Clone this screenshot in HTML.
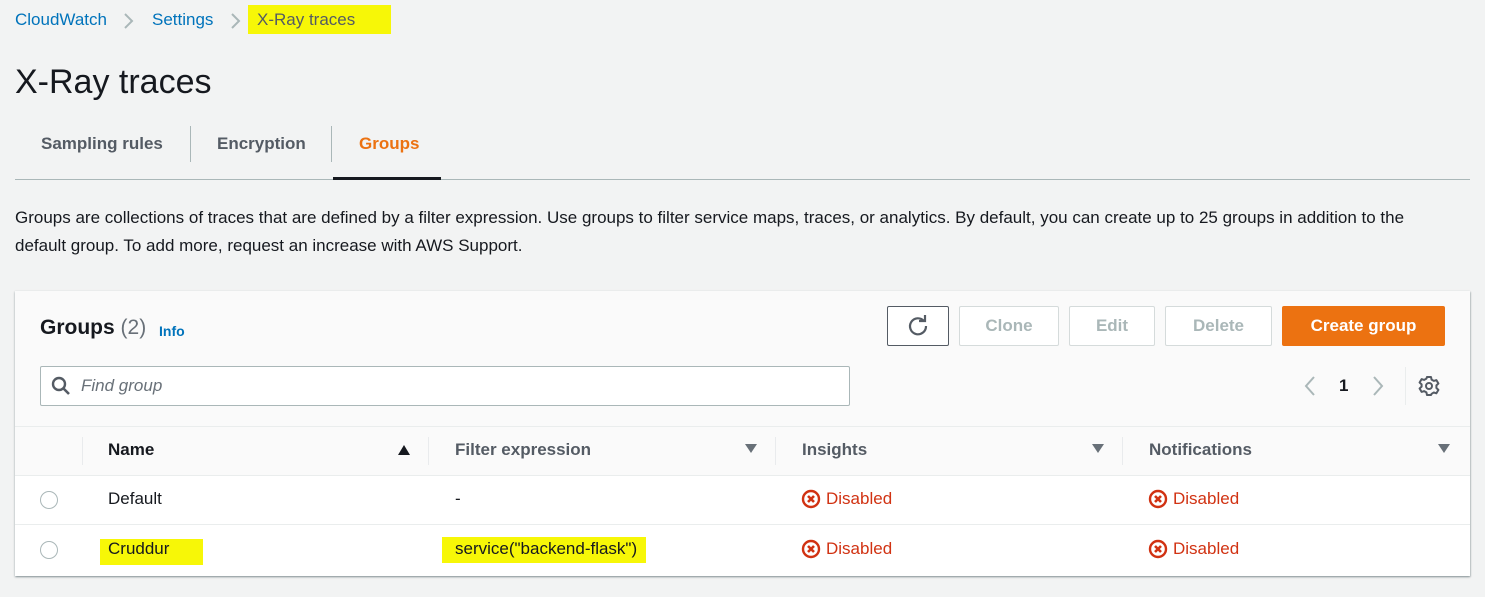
<!DOCTYPE html>
<html><head><meta charset="utf-8"><style>
*{box-sizing:border-box;margin:0;padding:0}
body{width:1485px;height:597px;background:#f2f3f3;font-family:"Liberation Sans",sans-serif;color:#16191f;position:relative;overflow:hidden}
.a{position:absolute;white-space:nowrap}
.btn{position:absolute;top:306px;height:40px;border:1px solid #d5dbdb;background:#fff;border-radius:2px;font-weight:bold;font-size:17px;color:#aab7b8;text-align:center;line-height:38px}
.th{position:absolute;font-weight:bold;font-size:17px;color:#16191f;top:440px}
.sep{position:absolute;top:437px;width:1px;height:28px;background:#e9ebed}
.tri{position:absolute;top:444px;width:0;height:0;border-left:6px solid transparent;border-right:6px solid transparent;border-top:9px solid #687078}
.dis{position:absolute;color:#d13212;font-size:17px;display:flex;align-items:center;gap:5px}
.radio{position:absolute;left:40px;width:18px;height:18px;border:1.5px solid #aab7b8;border-radius:50%;background:#fff}
</style></head><body>
<div class="a" style="left:15px;top:10px;font-size:17px;color:#0073bb">CloudWatch</div>
<svg class="a" style="left:122px;top:12px" width="14" height="18"><path d="M3 2l7 7-7 7" fill="none" stroke="#aab7b8" stroke-width="2"/></svg>
<div class="a" style="left:152px;top:10px;font-size:17px;color:#0073bb">Settings</div>
<svg class="a" style="left:229px;top:12px" width="14" height="18"><path d="M3 2l7 7-7 7" fill="none" stroke="#aab7b8" stroke-width="2"/></svg>
<div class="a" style="left:248px;top:5px;width:143px;height:29px;background:#f7f707"></div>
<div class="a" style="left:257px;top:10px;font-size:17px;color:#545b64">X-Ray traces</div>
<div class="a" style="left:15px;top:63px;font-size:34px;color:#16191f">X-Ray traces</div>
<div class="a" style="left:41px;top:134px;font-size:17px;font-weight:bold;color:#545b64">Sampling rules</div>
<div class="a" style="left:190px;top:126px;width:1px;height:36px;background:#aab7b8"></div>
<div class="a" style="left:217px;top:134px;font-size:17px;font-weight:bold;color:#545b64">Encryption</div>
<div class="a" style="left:331px;top:126px;width:1px;height:36px;background:#aab7b8"></div>
<div class="a" style="left:359px;top:134px;font-size:17px;font-weight:bold;color:#ec7211">Groups</div>
<div class="a" style="left:15px;top:179px;width:1455px;height:1px;background:#aab7b8"></div>
<div class="a" style="left:333px;top:177px;width:108px;height:3px;background:#16191f"></div>
<div class="a" style="left:15px;top:204px;font-size:17px;line-height:28px;color:#16191f;white-space:normal;width:1440px">Groups are collections of traces that are defined by a filter expression. Use groups to filter service maps, traces, or analytics. By default, you can create up to 25 groups in addition to the default group. To add more, request an increase with AWS Support.</div>
<div class="a" style="left:15px;top:291px;width:1455px;height:285px;background:#fafafa;box-shadow:0 1px 2px rgba(0,28,36,.4),1px 1px 1px rgba(0,28,36,.1)"></div>
<div class="a" style="left:40px;top:316px;font-size:21px;font-weight:bold">Groups <span style="font-weight:normal;color:#687078">(2)</span></div>
<div class="a" style="left:159px;top:323px;font-size:14px;font-weight:bold;color:#0073bb">Info</div>
<div class="btn" style="left:887px;width:62px;border-color:#545b64;color:#545b64"><svg width="24" height="24" viewBox="0 0 24 24" style="margin-top:7px"><path d="M18 7A8 8 0 1 0 20 12" fill="none" stroke="#545b64" stroke-width="2.2"/><path d="M13 7h6V1" fill="none" stroke="#545b64" stroke-width="2.2"/></svg></div>
<div class="btn" style="left:959px;width:100px">Clone</div>
<div class="btn" style="left:1069px;width:86px">Edit</div>
<div class="btn" style="left:1165px;width:107px">Delete</div>
<div class="btn" style="left:1282px;width:163px;background:#ec7211;border-color:#ec7211;color:#fff">Create group</div>
<div class="a" style="left:40px;top:366px;width:810px;height:40px;border:1px solid #aab7b8;border-radius:2px;background:#fff"></div>
<svg class="a" style="left:51px;top:376px" width="20" height="20"><circle cx="8" cy="8" r="6" fill="none" stroke="#545b64" stroke-width="2.4"/><path d="M12.5 12.5l5.5 5.5" stroke="#545b64" stroke-width="2.6"/></svg>
<div class="a" style="left:81px;top:376px;font-size:17px;font-style:italic;color:#687078">Find group</div>
<svg class="a" style="left:1302px;top:375px" width="16" height="22"><path d="M12 2L4 11l8 9" fill="none" stroke="#aab7b8" stroke-width="2"/></svg>
<div class="a" style="left:1339px;top:376px;font-size:17px;font-weight:bold">1</div>
<svg class="a" style="left:1370px;top:375px" width="16" height="22"><path d="M4 2l8 9-8 9" fill="none" stroke="#aab7b8" stroke-width="2"/></svg>
<div class="a" style="left:1405px;top:367px;width:1px;height:38px;background:#eaeded"></div>
<svg class="a" style="left:1418px;top:375px" width="22" height="22" viewBox="0 0 22 22"><path d="M9 2h4l.6 2.6 2.2 1.3 2.6-.8 2 3.4-2 1.9v2.6l2 1.9-2 3.4-2.6-.8-2.2 1.3L13 20H9l-.6-2.6-2.2-1.3-2.6.8-2-3.4 2-1.9V9.4l-2-1.9 2-3.4 2.6.8 2.2-1.3z" fill="none" stroke="#545b64" stroke-width="2" stroke-linejoin="round"/><circle cx="11" cy="11" r="3" fill="none" stroke="#545b64" stroke-width="2"/></svg>
<div class="a" style="left:15px;top:426px;width:1455px;height:1px;background:#eaeded"></div>
<div class="a" style="left:15px;top:475px;width:1455px;height:101px;background:#fff"></div>
<div class="a" style="left:15px;top:475px;width:1455px;height:1px;background:#eaeded"></div>
<div class="a" style="left:15px;top:524px;width:1455px;height:1px;background:#eaeded"></div>
<div class="sep" style="left:82px"></div><div class="sep" style="left:428px"></div><div class="sep" style="left:775px"></div><div class="sep" style="left:1122px"></div>
<div class="th" style="left:108px">Name</div>
<div class="a" style="left:398px;top:445px;width:0;height:0;border-left:6px solid transparent;border-right:6px solid transparent;border-bottom:10px solid #16191f"></div>
<div class="th" style="left:455px;color:#545b64">Filter expression</div><div class="tri" style="left:745px"></div>
<div class="th" style="left:802px;color:#545b64">Insights</div><div class="tri" style="left:1092px"></div>
<div class="th" style="left:1149px;color:#545b64">Notifications</div><div class="tri" style="left:1438px"></div>
<div class="radio" style="top:491px"></div><div class="radio" style="top:541px"></div>
<div class="a" style="left:108px;top:489px;font-size:17px">Default</div>
<div class="a" style="left:455px;top:489px;font-size:17px">-</div>
<div class="a" style="left:100px;top:539px;width:103px;height:26px;background:#f7f707"></div>
<div class="a" style="left:108px;top:539px;font-size:17px">Cruddur</div>
<div class="a" style="left:442px;top:537px;width:204px;height:26px;background:#f7f707"></div>
<div class="a" style="left:455px;top:539px;font-size:17px">service("backend-flask")</div>
<svg width="0" height="0" style="position:absolute"><symbol id="x" viewBox="0 0 20 20"><circle cx="10" cy="10" r="8" fill="none" stroke="#d13212" stroke-width="2.4"/><path d="M7 7l6 6M13 7l-6 6" stroke="#d13212" stroke-width="2.6"/></symbol></svg>
<div class="dis" style="left:801px;top:489px"><svg width="20" height="20"><use href="#x"/></svg>Disabled</div>
<div class="dis" style="left:1148px;top:489px"><svg width="20" height="20"><use href="#x"/></svg>Disabled</div>
<div class="dis" style="left:801px;top:539px"><svg width="20" height="20"><use href="#x"/></svg>Disabled</div>
<div class="dis" style="left:1148px;top:539px"><svg width="20" height="20"><use href="#x"/></svg>Disabled</div>
</body></html>
